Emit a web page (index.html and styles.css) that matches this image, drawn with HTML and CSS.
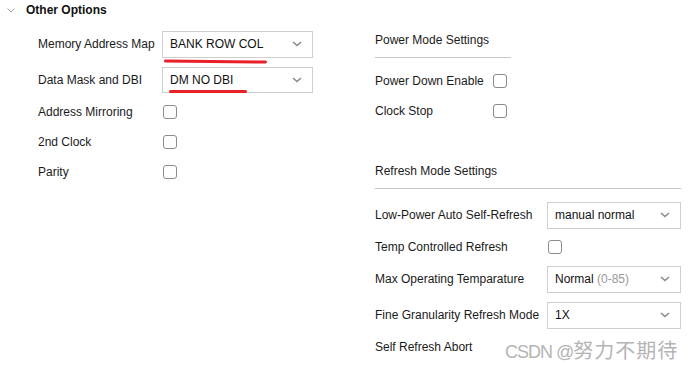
FILE: index.html
```html
<!DOCTYPE html>
<html>
<head>
  <title>Other Options</title>
  <link rel="stylesheet" href="styles.css">
</head>
<body>
  <div class="panel">
    <div class="header">
      <svg class="caret" width="8" height="5" viewBox="0 0 8 5"><path d="M0.5 0.5 L4 4 L7.5 0.5" fill="none" stroke="#a0a0a0" stroke-width="1"/></svg>
      <span class="header-title">Other Options</span>
    </div>
    <div class="columns">
      <div class="col-left">
        <div class="row row-select first">
          <span class="label">Memory Address Map</span>
          <div class="select wide">
            <span>BANK ROW COL</span>
            <svg class="chev" width="10" height="6" viewBox="0 0 10 6"><path d="M1 1 L5 4.5 L9 1" fill="none" stroke="#8a8a8a" stroke-width="1.6"/></svg>
            <span class="mark mark-one"></span>
          </div>
        </div>
        <div class="row row-select second">
          <span class="label">Data Mask and DBI</span>
          <div class="select wide">
            <span>DM NO DBI</span>
            <svg class="chev" width="10" height="6" viewBox="0 0 10 6"><path d="M1 1 L5 4.5 L9 1" fill="none" stroke="#8a8a8a" stroke-width="1.6"/></svg>
            <span class="mark mark-two"></span>
          </div>
        </div>
        <div class="row">
          <span class="label">Address Mirroring</span>
          <span class="check"></span>
        </div>
        <div class="row">
          <span class="label">2nd Clock</span>
          <span class="check"></span>
        </div>
        <div class="row">
          <span class="label">Parity</span>
          <span class="check"></span>
        </div>
      </div>

      <div class="col-right">
        <div class="section-title power">Power Mode Settings</div>
        <div class="rows-power">
          <div class="row">
            <span class="label label-power">Power Down Enable</span>
            <span class="check"></span>
          </div>
          <div class="row">
            <span class="label label-power">Clock Stop</span>
            <span class="check"></span>
          </div>
        </div>

        <div class="section-title refresh">Refresh Mode Settings</div>
        <div class="rows-refresh">
          <div class="row row-select">
            <span class="label label-refresh">Low-Power Auto Self-Refresh</span>
            <div class="select narrow">
              <span>manual normal</span>
              <svg class="chev" width="10" height="6" viewBox="0 0 10 6"><path d="M1 1 L5 4.5 L9 1" fill="none" stroke="#8a8a8a" stroke-width="1.6"/></svg>
            </div>
          </div>
          <div class="row row-short">
            <span class="label label-refresh">Temp Controlled Refresh</span>
            <span class="check"></span>
          </div>
          <div class="row row-select">
            <span class="label label-refresh">Max Operating Temparature</span>
            <div class="select narrow">
              <span>Normal <span class="muted">(0-85)</span></span>
              <svg class="chev" width="10" height="6" viewBox="0 0 10 6"><path d="M1 1 L5 4.5 L9 1" fill="none" stroke="#8a8a8a" stroke-width="1.6"/></svg>
            </div>
          </div>
          <div class="row row-select">
            <span class="label label-refresh">Fine Granularity Refresh Mode</span>
            <div class="select narrow">
              <span>1X</span>
              <svg class="chev" width="10" height="6" viewBox="0 0 10 6"><path d="M1 1 L5 4.5 L9 1" fill="none" stroke="#8a8a8a" stroke-width="1.6"/></svg>
            </div>
          </div>
          <div class="row row-short">
            <span class="label label-refresh">Self Refresh Abort</span>
          </div>
        </div>
      </div>
    </div>
    <div class="watermark">CSDN @<span class="cjk">努力不期待</span></div>
  </div>
</body>
</html>
```

FILE: styles.css
```css
body {
    margin: 0;
    background-color: #fff;
    font-family: "Liberation Sans", Arial, sans-serif;
    font-size: 12px;
    color: #1a1a1a;
}
.panel {
    position: relative;
    width: 692px;
    height: 367px;
    overflow: hidden;
}
.header {
    display: flex;
    align-items: center;
    height: 20px;
}
.caret {
    margin-left: 7px;
    margin-right: 11px;
}
.header-title {
    font-weight: bold;
    color: #111;
}
.columns {
    display: flex;
}
.col-left {
    width: 337px;
    padding-left: 38px;
    padding-top: 6px;
}
.col-right {
    width: 306px;
}
.row {
    display: flex;
    align-items: center;
    height: 30px;
}
.row-select {
    height: 36px;
}
.row-select.second {
    height: 35px;
}
.row-short {
    height: 28px;
}
.label {
    width: 124px;
    flex-shrink: 0;
    white-space: nowrap;
}
.label-power {
    width: 117px;
}
.label-refresh {
    width: 172px;
}
.select {
    position: relative;
    display: flex;
    align-items: center;
    justify-content: space-between;
    box-sizing: border-box;
    height: 27px;
    padding: 0 10px 0 7px;
    border: 1px solid #cfcfcf;
    background-color: #fff;
    color: #111;
}
.row-select.second .select {
    height: 26px;
}
.select.wide {
    width: 151px;
}
.select.narrow {
    width: 135px;
}
.muted {
    color: #999;
}
.check {
    box-sizing: border-box;
    width: 14px;
    height: 14px;
    border: 1px solid #8c8c8c;
    border-radius: 3px;
    margin-left: 1px;
}
.mark {
    position: absolute;
    height: 3px;
    background-color: #e8202a;
    border-radius: 2px;
}
.mark-one {
    left: 1px;
    width: 103px;
    bottom: -6px;
    transform: rotate(0.6deg);
}
.mark-two {
    left: 6px;
    width: 78px;
    bottom: -1px;
}
.section-title {
    padding-top: 7px;
    padding-bottom: 10px;
    line-height: 14px;
    border-bottom: 1px solid #c8c8c8;
    margin-bottom: 8px;
}
.section-title.power {
    padding-top: 13px;
    width: 136px;
}
.section-title.refresh {
    margin-top: 31px;
    width: 306px;
}
.watermark {
    position: absolute;
    left: 505px;
    top: 335px;
    font-size: 18px;
    color: #b4b4b4;
    white-space: nowrap;
    letter-spacing: -1px;
}
.cjk {
    font-family: "Noto Sans CJK SC", sans-serif;
    font-size: 20px;
    letter-spacing: 1px;
}
```
